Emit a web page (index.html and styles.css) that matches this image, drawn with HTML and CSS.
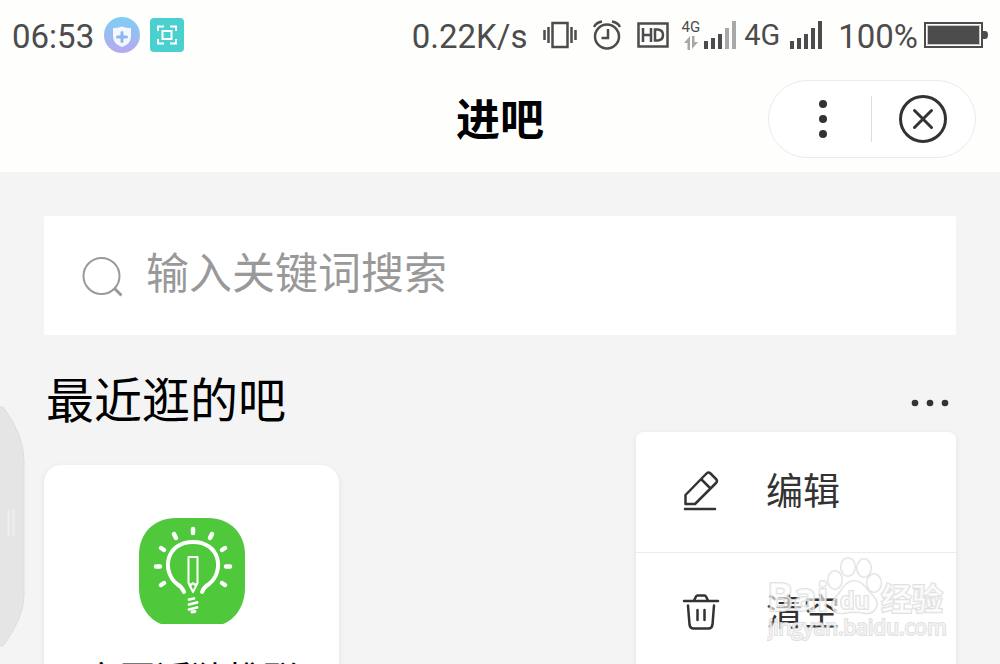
FILE: index.html
```
<!DOCTYPE html>
<html lang="zh-CN">
<head>
<meta charset="utf-8">
<meta name="viewport" content="width=device-width, initial-scale=1">
<title>进吧</title>
<link rel="stylesheet" href="styles.css">
</head>
<body>
<div class="screen">
  <div class="status">
    <div class="status-left">
      <span class="status-text">06:53</span>
      <svg class="icon" width="36" height="36" viewBox="0 0 36 36">
        <defs><linearGradient id="shieldFill" x1="0" y1="0" x2="0" y2="1"><stop offset="0" stop-color="#7cd0f2"/><stop offset="1" stop-color="#b7a8ef"/></linearGradient></defs>
        <circle cx="18" cy="18" r="18" fill="url(#shieldFill)"/>
        <path d="M18 9.500Q22 11 27 11V19Q27 27 18 30Q9 27 9 19V11Q14 11 18 9.500Z" fill="#f5f7ff"/>
        <path d="M18 15.500v9M13.500 20h9" stroke="#8fb5ee" stroke-width="3" stroke-linecap="round"/>
      </svg>
      <svg class="icon" width="34" height="34" viewBox="0 0 34 34">
        <rect width="34" height="34" rx="4" fill="#4bd0d0"/>
        <path d="M8 13V8.500h6M20 8.500h6V13M26 21v4.500h-6M14 25.500H8V21" fill="none" stroke="#fff" stroke-width="2"/>
        <rect x="12.500" y="13" width="9" height="8" fill="none" stroke="#fff" stroke-width="2"/>
      </svg>
    </div>
    <div class="status-right">
      <span class="status-text">0.22K/s</span>
      <svg class="icon" width="34" height="28" viewBox="0 0 34 28" fill="none" stroke="#4c4c4c">
        <rect x="9.500" y="2" width="15" height="24" stroke-width="2.500"/>
        <path d="M1.500 9v10M5.500 6v16M28.500 6v16M32.500 9v10" stroke-width="2.500"/>
      </svg>
      <svg class="icon" width="28" height="30" viewBox="0 0 28 30" fill="none" stroke="#4c4c4c" stroke-width="2.500">
        <circle cx="14" cy="16.500" r="12"/>
        <path d="M15 9v9H8.500M1 7Q3 2.500 9 1.500M27 7Q25 2.500 19 1.500"/>
      </svg>
      <svg class="icon" width="32" height="26" viewBox="0 0 32 26" fill="none" stroke="#4c4c4c">
        <rect x="1.500" y="1.500" width="29" height="23" stroke-width="2.500"/>
        <path d="M6 6v14M14 6v14M6 13h8M18 7.500v11h3Q26 18 26 13T21 7.500Z" stroke-width="2.500"/>
      </svg>
      <div class="signal-group small">
        <div class="network">
          <span class="network-small">4G</span>
          <svg width="14" height="14" viewBox="0 0 14 14" fill="#a8a8a8"><path d="M6 14H3.500V7H0L6 0ZM8 0h2.500v6H14L8 13Z"/></svg>
        </div>
        <svg class="icon" width="32" height="28" viewBox="0 0 32 28" fill="#4c4c4c">
          <path d="M0 20h4v8H0ZM7 17h4v11H7ZM14 13h4v15h-4Z"/>
          <path d="M21 7h4v21h-4ZM28 0h4v28h-4Z" fill="#a8a8a8"/>
        </svg>
      </div>
      <div class="signal-group wide">
        <span class="network-large">4G</span>
        <svg class="icon" width="32" height="28" viewBox="0 0 32 28" fill="#4c4c4c">
          <path d="M0 20h4v8H0ZM7 17h4v11H7ZM14 13h4v15h-4ZM21 7h4v21h-4ZM28 0h4v28h-4Z"/>
        </svg>
      </div>
      <div class="signal-group">
        <span class="status-text">100%</span>
        <svg class="icon" width="64" height="26" viewBox="0 0 64 26" fill="#4c4c4c">
          <rect x="1" y="1" width="57" height="24" fill="none" stroke="#4c4c4c" stroke-width="2"/>
          <rect x="3" y="3" width="53" height="20" fill="#c8c8c8"/>
          <rect x="4" y="4" width="51" height="18"/>
          <path d="M59 9h2q3 0 3 4t-3 4h-2Z"/>
        </svg>
      </div>
    </div>
  </div>

  <header class="header">
    <h1 class="title">进吧</h1>
    <div class="capsule">
      <button class="capsule-btn" type="button" aria-label="更多">
        <svg width="10" height="40" viewBox="0 0 10 40" fill="#333"><circle cx="5" cy="5" r="4"/><circle cx="5" cy="20" r="4"/><circle cx="5" cy="35" r="4"/></svg>
      </button>
      <button class="capsule-btn close" type="button" aria-label="关闭">
        <svg width="50" height="50" viewBox="0 0 50 50" fill="none" stroke="#333" stroke-width="3" stroke-linecap="round"><circle cx="25" cy="25" r="22.500"/><path d="M16.500 16.500l17 17M33.500 16.500l-17 17"/></svg>
      </button>
    </div>
  </header>

  <main class="content">
    <label class="search">
      <svg class="icon" width="42" height="42" viewBox="0 0 42 42" fill="none" stroke="#999" stroke-width="2"><circle cx="19.500" cy="21" r="18"/><path d="M32.500 33.500l7 7" stroke-width="3"/></svg>
      <input class="search-input" type="text" placeholder="输入关键词搜索" aria-label="搜索">
    </label>

    <section class="recent">
      <div class="recent-head">
        <h2 class="recent-title">最近逛的吧</h2>
        <button class="more" type="button" aria-label="更多操作">
          <svg width="38" height="8" viewBox="0 0 38 8" fill="#333"><circle cx="4" cy="4" r="3.300"/><circle cx="19" cy="4" r="3.300"/><circle cx="34" cy="4" r="3.300"/></svg>
        </button>
        <div class="menu">
          <button class="menu-item" type="button">
            <svg class="icon" width="38" height="42" viewBox="0 0 38 42" fill="none" stroke="#333" stroke-width="2.500" stroke-linejoin="round" stroke-linecap="round"><path d="M3.500 33V24L24.500 2.500q2-2 4 0l5.500 5.500q2 2 0 4L13 33ZM19.500 8.500l8.500 8.500M3 38h30"/></svg>
            <span>编辑</span>
          </button>
          <button class="menu-item" type="button">
            <svg class="icon" width="38" height="38" viewBox="0 0 38 38" fill="none" stroke="#333" stroke-width="2.500" stroke-linejoin="round" stroke-linecap="round"><path d="M2 7h34M12 6.500l2-4q.500-1 1.500-1h7q1 0 1.500 1L26 6.500M6 11.500l1.500 19q.500 4 4 4h15q3.500 0 4-4L32 11.500M15.500 16v10M22.500 16v10"/></svg>
            <span>清空</span>
          </button>
          <svg class="watermark" width="180" height="90" viewBox="0 0 180 90" aria-hidden="true">
            <g class="mark">
              <text x="0" y="57" font-size="39" font-weight="700">Bai</text>
              <ellipse cx="68" cy="26" rx="7" ry="9"/>
              <ellipse cx="81" cy="13" rx="7" ry="9"/>
              <ellipse cx="97" cy="14" rx="7" ry="9"/>
              <ellipse cx="107" cy="29" rx="7" ry="9"/>
              <path d="M87 27C96 27 99 35 106 42C114 50 108 61 97 59Q87 57 77 59C65 61 62 50 69 43C76 36 78 27 87 27Z"/>
              <text x="73" y="55" font-size="23" font-weight="700">du</text>
              <text x="114" y="56" font-size="31" font-weight="700" class="cjk">经验</text>
              <text x="1" y="81" font-size="21">jingyan.baidu.com</text>
            </g>
          </svg>
        </div>
      </div>
      <article class="card">
        <svg class="card-icon" width="106" height="106" viewBox="0 0 106 106">
          <path d="M37 0H69C91 0 106 15 106 37V70C106 87 97 101 84 106H22C9 101 0 87 0 70V37C0 15 15 0 37 0Z" fill="#4fc93b"/>
          <g fill="none" stroke="#fff" stroke-linecap="round" stroke-linejoin="round">
            <path d="M45 74Q43 69 38 66C22 53 27 24 54 24S86 53 70 66Q65 69 63 74" stroke-width="4"/>
            <path d="M54 11v4M35 16l2 4M73 16l-2 4M22 30l3 2M86 30l-3 2M17 48.500h4M87 48.500h4M22 67l3-2M86 67l-3-2" stroke-width="4.500"/>
            <path d="M49.500 39h9v26L54 74l-4.500-9ZM49.500 65l2.500 2 2-2 2 2 2.500-2" stroke-width="2"/>
            <path d="M50 81.500l5-1M50 86.500l8-2M50 91.500l8-2M53 94l3-.5" stroke-width="2.800"/>
          </g>
        </svg>
        <h3 class="card-name">方图近猜推联</h3>
      </article>
    </section>
  </main>

  <svg class="edge-handle" width="28" height="244" viewBox="0 0 28 244" aria-hidden="true">
    <path d="M-2 2H3Q24 29 24 56V190Q24 213 3 241H-2Z" fill="#e5e5e5" stroke="#dedede"/>
    <path d="M8.500 104v27M13.500 104v27" stroke="#efefef" stroke-width="2"/>
  </svg>
</div>
</body>
</html>
```
FILE: styles.css
```
* {
  box-sizing: border-box;
}

body {
  margin: 0;
  background: #f4f4f4;
  color: #000;
  font-family: Roboto, "Noto Sans CJK SC", sans-serif;
}

button {
  padding: 0;
  border: 0;
  background: none;
  color: inherit;
  font: inherit;
}

svg {
  display: block;
}

.icon {
  flex: none;
}

.screen {
  position: relative;
  height: 100vh;
  overflow: hidden;
}

.status {
  display: flex;
  align-items: center;
  justify-content: space-between;
  height: 70px;
  padding: 0 12px;
  background: #fefefd;
  color: #4c4c4c;
}

.status-left {
  display: flex;
  align-items: center;
  gap: 10px;
}

.status-right {
  display: flex;
  align-items: center;
  gap: 16px;
}

.status-text {
  font-size: 33px;
  line-height: 40px;
  padding-top: 4px;
}

.signal-group {
  display: flex;
  align-items: center;
  gap: 6px;
}

.signal-group.small {
  gap: 4px;
  margin-left: -4px;
}

.signal-group.wide {
  gap: 10px;
  margin-left: -8px;
}

.network {
  display: flex;
  flex-direction: column;
  align-items: center;
  gap: 2px;
}

.network-small {
  font-size: 15px;
  line-height: 14px;
}

.network-large {
  font-size: 29px;
  line-height: 32px;
}

.header {
  display: grid;
  grid-template-columns: 1fr auto 1fr;
  align-items: center;
  height: 102px;
  padding: 0 24px 4px;
  background: #fefefd;
}

.title {
  grid-column: 2;
  margin: 0;
  padding-top: 4px;
  font-size: 44px;
  line-height: 64px;
  font-weight: 700;
}

.capsule {
  justify-self: end;
  display: grid;
  grid-template-columns: 102px 104px;
  align-items: center;
  height: 78px;
  border: 1px solid #ebebeb;
  border-radius: 39px;
  background: #fff;
}

.capsule-btn {
  display: flex;
  align-items: center;
  justify-content: center;
  height: 46px;
  padding-left: 6px;
}

.capsule-btn.close {
  padding: 0 2px 0 0;
  border-left: 1px solid #ddd;
}

.content {
  padding: 44px;
}

.search {
  display: flex;
  align-items: center;
  gap: 22px;
  height: 119px;
  padding: 0 38px;
  border-radius: 3px;
  background: #fff;
}

.search-input {
  flex: 1;
  min-width: 0;
  height: 64px;
  padding: 0;
  margin-bottom: 12px;
  border: 0;
  outline: 0;
  background: none;
  color: #333;
  font: 43px "Noto Sans CJK SC", sans-serif;
}

.search-input::placeholder {
  color: #999;
  opacity: 1;
}

.recent-head {
  position: relative;
  display: flex;
  align-items: center;
  justify-content: space-between;
  height: 98px;
  margin-top: 16px;
  padding: 0 7px 0 2px;
}

.recent-title {
  margin: 0;
  padding-top: 4px;
  font-size: 48px;
  line-height: 70px;
  font-weight: 400;
}

.more {
  padding: 12px 0 6px;
}

.menu {
  position: absolute;
  top: 81px;
  right: 0;
  width: 320px;
  border-radius: 8px;
  background: #fff;
  box-shadow: 0 2px 6px rgba(0, 0, 0, 0.08);
}

.menu-item {
  display: flex;
  align-items: center;
  gap: 46px;
  width: 100%;
  height: 120px;
  padding: 0 46px;
  color: #333;
  font-size: 37px;
  line-height: 54px;
}

.menu-item span {
  padding-top: 2px;
}

.menu-item + .menu-item {
  border-top: 1px solid #ebebeb;
}

.watermark {
  position: absolute;
  top: 122px;
  right: 9px;
}

.mark {
  fill: rgba(255, 255, 255, 0.65);
  stroke: rgba(216, 216, 216, 0.8);
  stroke-width: 2px;
  paint-order: stroke;
  font-family: "Open Sans", sans-serif;
}

.cjk {
  font-family: "Noto Sans CJK SC", sans-serif;
}

.card {
  display: flex;
  flex-direction: column;
  align-items: center;
  gap: 30px;
  width: 295px;
  margin-top: 16px;
  padding: 53px 20px 40px;
  border-radius: 18px;
  background: #fff;
  box-shadow: 0 2px 6px rgba(0, 0, 0, 0.08);
}

.card-name {
  margin: 0;
  font-size: 36px;
  line-height: 54px;
  font-weight: 400;
}

.edge-handle {
  position: absolute;
  left: 0;
  top: 405px;
}
```
